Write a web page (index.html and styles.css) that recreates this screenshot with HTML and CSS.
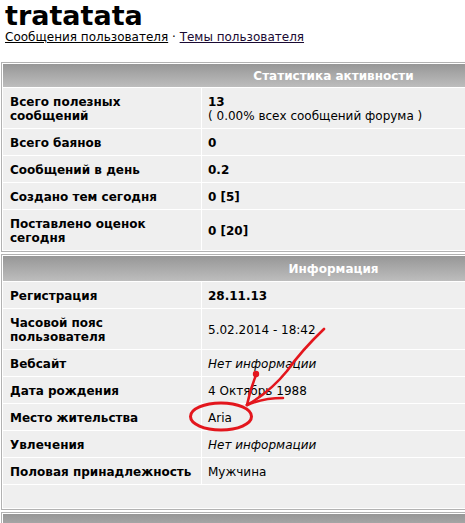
FILE: index.html
```html
<!DOCTYPE html>
<html lang="ru">
<head>
<meta charset="utf-8">
<title>tratatata</title>
<link rel="stylesheet" href="styles.css">
</head>
<body>
<div class="page">
  <h1 class="user-name">tratatata</h1>
  <div class="user-links">
    <a href="#" class="link">Сообщения пользователя</a> · <a href="#" class="link visited">Темы пользователя</a>
  </div>

  <div class="panel panel-first">
    <div class="panel-head head-short"><span></span><span class="head-title">Статистика активности</span></div>
    <div class="cell label tall">Всего полезных сообщений</div>
    <div class="cell value"><b>13</b><br>( 0.00% всех сообщений форума )</div>
    <div class="cell label">Всего баянов</div>
    <div class="cell value"><b>0</b></div>
    <div class="cell label">Сообщений в день</div>
    <div class="cell value"><b>0.2</b></div>
    <div class="cell label">Создано тем сегодня</div>
    <div class="cell value"><b>0 [5]</b></div>
    <div class="cell label tall">Поставлено оценок сегодня</div>
    <div class="cell value center"><b>0 [20]</b></div>
  </div>

  <div class="panel panel-next">
    <div class="panel-head"><span></span><span class="head-title">Информация</span></div>
    <div class="cell label">Регистрация</div>
    <div class="cell value"><b>28.11.13</b></div>
    <div class="cell label tall">Часовой пояс пользователя</div>
    <div class="cell value center">5.02.2014 - 18:42</div>
    <div class="cell label">Вебсайт</div>
    <div class="cell value"><i>Нет информации</i></div>
    <div class="cell label">Дата рождения</div>
    <div class="cell value">4 Октябрь 1988</div>
    <div class="cell label">Место жительства</div>
    <div class="cell value">Aria</div>
    <div class="cell label">Увлечения</div>
    <div class="cell value"><i>Нет информации</i></div>
    <div class="cell label">Половая принадлежность</div>
    <div class="cell value">Мужчина</div>
    <div class="cell empty"></div>
  </div>

  <div class="panel panel-next">
    <div class="panel-head"><span></span><span class="head-title"></span></div>
  </div>

  <svg class="scribble" width="465" height="523" viewBox="0 0 465 523">
    <g fill="none" stroke="#e3161d" stroke-width="2.6" stroke-linecap="round" stroke-linejoin="round">
      <path d="M324,329 Q302,350 287,371 Q270,392 247,405"/>
      <path d="M256,375 Q250,390 247,405"/>
      <path d="M247,405 Q263,398 283,398"/>
      <ellipse cx="221" cy="416.5" rx="30.5" ry="13.5" stroke-width="3"/>
    </g>
    <circle cx="256" cy="374" r="3.2" fill="#e3161d"/>
  </svg>
</div>
</body>
</html>
```

FILE: styles.css
```css
html, body {
  margin: 0;
  padding: 0;
  background: #fff;
}

.page {
  position: relative;
  width: 465px;
  height: 523px;
  overflow: hidden;
  font-family: "DejaVu Sans", Verdana, sans-serif;
  font-size: 12px;
  line-height: 14px;
  color: #000;
}

.user-name {
  margin: 0 0 0 5px;
  font-size: 27px;
  line-height: 32px;
  font-weight: bold;
}

.user-links {
  margin: -2px 0 0 5px;
  line-height: 14px;
}

.link {
  color: #000;
  text-decoration: underline;
}

.link.visited {
  color: #1a0a33;
}

.panel {
  margin: 18px 0 0 1px;
  width: 462px;
  border: 1px solid #b2b2b2;
  padding: 1px;
  box-sizing: content-box;
  display: grid;
  grid-template-columns: 198px 1fr;
  gap: 1px;
  background: #fff;
}

.panel.panel-next {
  margin-top: 2px;
}

.panel-head {
  grid-column: 1 / -1;
  display: grid;
  grid-template-columns: 199px 1fr;
  align-items: center;
  height: 25px;
  background: linear-gradient(#979797, #bdbdbd);
  color: #fff;
  font-weight: bold;
}

.panel-head.head-short {
  height: 23px;
}

.head-title {
  text-align: center;
  padding-top: 1px;
}

.cell {
  background: #efefef;
  padding: 7px 7px 5px 7px;
  min-height: 14px;
}

.label {
  font-weight: bold;
}

.value {
  padding-left: 6px;
}

.value.center {
  display: flex;
  align-items: center;
}

.empty {
  grid-column: 1 / -1;
  height: 23px;
  padding: 0;
}

.scribble {
  position: absolute;
  top: 0;
  left: 0;
  pointer-events: none;
}
```
